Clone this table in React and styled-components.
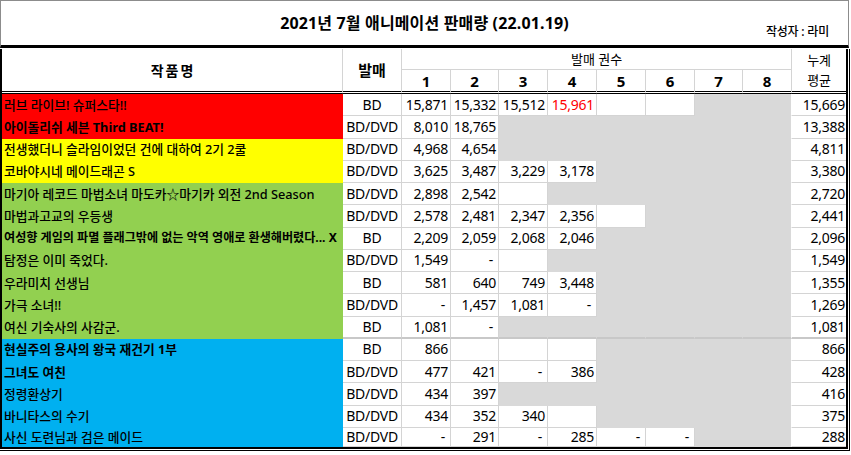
import React from 'react';
import styled, { createGlobalStyle } from 'styled-components';

const RED = '#ff0000';
const YELLOW = '#ffff00';
const GREEN = '#92d050';
const BLUE = '#00b0f0';
const GRID = '#d4d4d4';
const FILL = '#d9d9d9';

const GlobalStyle = createGlobalStyle`
    * { box-sizing: border-box; }
    body {
        margin: 0;
        background: #fff;
        font-family: "Noto Sans", "Noto Sans CJK KR", sans-serif;
        color: #000;
    }
`;

const Frame = styled.div`
    width: 851px;
    height: 455px;
    background: #fff;
`;

const TitleBar = styled.div`
    width: 849px;
    height: 48px;
    margin-bottom: 1px;
    border: 1px solid #8c8c8c;
    border-bottom: 3px solid #000;
    display: grid;
    grid-template-columns: 1fr auto 1fr;
    align-items: center;
`;

const Title = styled.h1`
    grid-column: 2;
    margin: 0;
    font-size: 16px;
    font-weight: 700;
    letter-spacing: 0.15px;
    line-height: 20px;
    white-space: nowrap;
`;

const Author = styled.span`
    grid-column: 3;
    justify-self: end;
    align-self: end;
    padding: 0 19px 5px 0;
    font-size: 12px;
    font-weight: 500;
    line-height: 16px;
    letter-spacing: -0.2px;
`;

const SheetWrap = styled.div`
    width: 850px;
    padding: 0 1px 1px 0;
    border-right: 1px solid #000;
    border-bottom: 1px solid #000;
`;

const Sheet = styled.table`
    width: 848px;
    table-layout: fixed;
    border-collapse: separate;
    border-spacing: 0;
    border: 2px solid #000;
    border-top: none;
`;

const Col = styled.col`
    width: ${props => props.$w}px;
`;

const HeadRow = styled.tr`
    height: ${props => props.$h}px;
`;

const HeadCell = styled.th`
    padding: 0;
    border-right: ${props => props.$end ? 'none' : `1px solid ${GRID}`};
    border-bottom: ${props => props.$double ? '3px double #000' : `1px solid ${GRID}`};
    font-size: ${props => props.$size || 13}px;
    font-weight: ${props => props.$bold ? 700 : 400};
    line-height: 20px;
    text-align: center;
    vertical-align: middle;
    white-space: nowrap;
`;

const NameHead = styled(HeadCell)`
    font-family: "Noto Sans CJK KR", sans-serif;
    letter-spacing: 2px;
    padding-left: 2px;
`;

const Row = styled.tr`
    height: ${props => props.$last ? 19 : 22.25}px;
`;

const NameCell = styled.td`
    padding: 0 0 0 2px;
    background: ${props => props.$bg};
    border-right: 1px solid ${props => props.$bg};
    border-bottom: ${props => props.$sep ? 2 : 1}px solid ${props => props.$bg};
    font-size: ${props => props.$size || 12.75}px;
    font-weight: ${props => props.$bold ? 700 : 500};
    line-height: 16px;
    white-space: nowrap;
    overflow: hidden;
    vertical-align: middle;
`;

const TypeCell = styled.td`
    padding: 0;
    border-right: 1px solid ${GRID};
    border-bottom: ${props => props.$sep ? 2 : 1}px solid ${props => props.$sep ? '#c8c8c8' : GRID};
    font-size: 14px;
    letter-spacing: -0.25px;
    line-height: 18px;
    text-align: center;
    vertical-align: middle;
    white-space: nowrap;
`;

const NumCell = styled.td`
    padding: 0 ${props => props.$dash ? 5 : 2}px 0 0;
    background: ${props => props.$fill ? FILL : '#fff'};
    border-right: 1px solid ${props => props.$edge ? '#fff' : props.$fill ? FILL : GRID};
    border-bottom: ${props => props.$sep ? 2 : 1}px solid ${props => props.$sep ? '#c8c8c8' : props.$fill ? FILL : GRID};
    color: ${props => props.$red ? RED : '#000'};
    font-size: 14px;
    letter-spacing: -0.25px;
    line-height: 18px;
    text-align: right;
    vertical-align: middle;
    white-space: nowrap;
`;

const TotalCell = styled(NumCell)`
    border-right: none;
    padding-right: 1px;
`;

const widths = [341, 59, 49, 48, 49, 49, 49, 49, 48, 49, 54];

const G = null;

const rows = [
    { name: '러브 라이브! 슈퍼스타!!', bg: RED, type: 'BD', v: ['15,871', '15,332', '15,512', '!15,961', '', '', G, G], total: '15,669' },
    { name: '아이돌리쉬 세븐 Third BEAT!', bg: RED, bold: true, type: 'BD/DVD', v: ['8,010', '18,765', G, G, G, G, G, G], total: '13,388' },
    { name: '전생했더니 슬라임이었던 건에 대하여 2기 2쿨', bg: YELLOW, type: 'BD/DVD', v: ['4,968', '4,654', G, G, G, G, G, G], total: '4,811' },
    { name: '코바야시네 메이드래곤 S', bg: YELLOW, type: 'BD/DVD', v: ['3,625', '3,487', '3,229', '3,178', G, G, G, G], total: '3,380' },
    { name: '마기아 레코드 마법소녀 마도카☆마기카 외전 2nd Season', bg: GREEN, type: 'BD/DVD', v: ['2,898', '2,542', '', G, G, G, G, G], total: '2,720' },
    { name: '마법과고교의 우등생', bg: GREEN, type: 'BD/DVD', v: ['2,578', '2,481', '2,347', '2,356', '', G, G, G], total: '2,441' },
    { name: '여성향 게임의 파멸 플래그밖에 없는 악역 영애로 환생해버렸다... X', bg: GREEN, bold: true, size: 12.1, type: 'BD', v: ['2,209', '2,059', '2,068', '2,046', G, G, G, G], total: '2,096' },
    { name: '탐정은 이미 죽었다.', bg: GREEN, type: 'BD/DVD', v: ['1,549', '-', '', G, G, G, G, G], total: '1,549' },
    { name: '우라미치 선생님', bg: GREEN, type: 'BD', v: ['581', '640', '749', '3,448', G, G, G, G], total: '1,355' },
    { name: '가극 소녀!!', bg: GREEN, type: 'BD/DVD', v: ['-', '1,457', '1,081', '-', G, G, G, G], total: '1,269' },
    { name: '여신 기숙사의 사감군.', bg: GREEN, type: 'BD', sep: true, v: ['1,081', '-', G, G, G, G, G, G], total: '1,081' },
    { name: '현실주의 용사의 왕국 재건기 1부', bg: BLUE, bold: true, type: 'BD', v: ['866', '', '', '', G, G, G, G], total: '866' },
    { name: '그녀도 여친', bg: BLUE, bold: true, type: 'BD/DVD', v: ['477', '421', '-', '386', G, G, G, G], total: '428' },
    { name: '정령환상기', bg: BLUE, type: 'BD/DVD', v: ['434', '397', G, G, G, G, G, G], total: '416' },
    { name: '바니타스의 수기', bg: BLUE, type: 'BD/DVD', v: ['434', '352', '340', '', G, G, G, G], total: '375' },
    { name: '사신 도련님과 검은 메이드', bg: BLUE, type: 'BD/DVD', v: ['-', '291', '-', '285', '-', '-', G, G], total: '288' },
];

const Value = ({ value, sep, edge }) => {
    if (value === null) return <NumCell $fill $sep={sep} $edge={edge} />;
    const red = value.startsWith('!');
    const text = red ? value.slice(1) : value;
    return (
        <NumCell $red={red} $dash={text === '-'} $sep={sep} $edge={edge}>
            {text}
        </NumCell>
    );
};

const App = () => {
    return (
        <Frame>
            <GlobalStyle />
            <TitleBar>
                <Title>2021년 7월 애니메이션 판매량 (22.01.19)</Title>
                <Author>작성자 : 라미</Author>
            </TitleBar>
            <SheetWrap>
                <Sheet>
                    <colgroup>
                        {widths.map((w, i) => <Col key={i} $w={w} />)}
                    </colgroup>
                    <thead>
                        <HeadRow $h={21}>
                            <NameHead rowSpan={2} $double $bold $size={14}>작품명</NameHead>
                            <HeadCell rowSpan={2} $double $bold $size={15}>발매</HeadCell>
                            <HeadCell colSpan={8}>발매 권수</HeadCell>
                            <HeadCell rowSpan={2} $double $end>누계<br />평균</HeadCell>
                        </HeadRow>
                        <HeadRow $h={24}>
                            {[1, 2, 3, 4, 5, 6, 7, 8].map(n => (
                                <HeadCell key={n} $double $bold $size={15}>{n}</HeadCell>
                            ))}
                        </HeadRow>
                    </thead>
                    <tbody>
                        {rows.map((row, i) => (
                            <Row key={row.name} $last={i === rows.length - 1}>
                                <NameCell $bg={row.bg} $bold={row.bold} $size={row.size} $sep={row.sep}>
                                    {row.name}
                                </NameCell>
                                <TypeCell $sep={row.sep}>{row.type}</TypeCell>
                                {row.v.map((value, j) => (
                                    <Value key={j} value={value} sep={row.sep} edge={j === 7} />
                                ))}
                                <TotalCell $sep={row.sep}>{row.total}</TotalCell>
                            </Row>
                        ))}
                    </tbody>
                </Sheet>
            </SheetWrap>
        </Frame>
    );
};

export default App;
